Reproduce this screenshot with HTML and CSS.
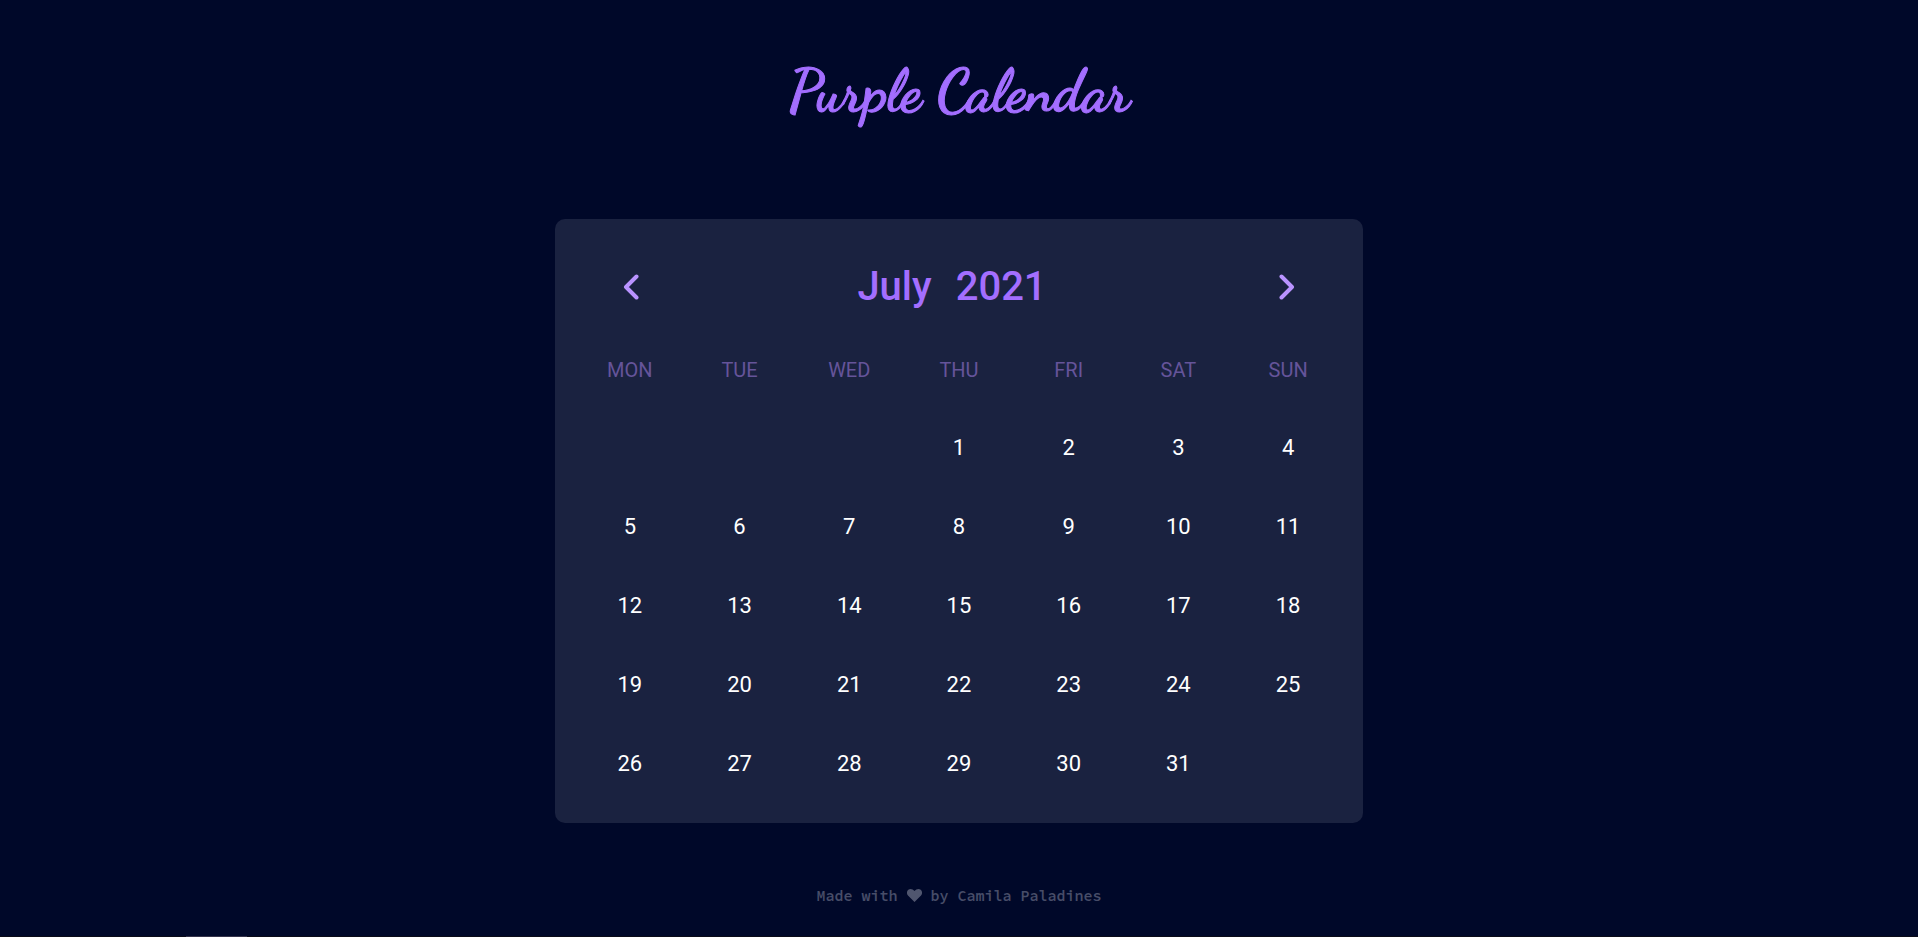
FILE: index.html
```html
<!DOCTYPE html>
<html lang="en">
<head>
<meta charset="utf-8">
<title>Purple Calendar</title>
<link rel="stylesheet" href="styles.css">
</head>
<body>
<h1 class="title">Purple Calendar</h1>
<main class="calendar">
  <header class="calendar-header">
    <button class="arrow" type="button" aria-label="Previous month">
      <svg width="16" height="26" viewBox="0 0 16 26"><path d="M13.5 2.5 3 13l10.500 10.500"/></svg>
    </button>
    <h2 class="period"><span>July</span><span>2021</span></h2>
    <button class="arrow" type="button" aria-label="Next month">
      <svg width="16" height="26" viewBox="0 0 16 26"><path d="M2.500 2.500 13 13 2.500 23.500"/></svg>
    </button>
  </header>
  <table class="days">
    <thead>
      <tr><th scope="col">MON</th><th scope="col">TUE</th><th scope="col">WED</th><th scope="col">THU</th><th scope="col">FRI</th><th scope="col">SAT</th><th scope="col">SUN</th></tr>
    </thead>
    <tbody>
      <tr><td></td><td></td><td></td><td>1</td><td>2</td><td>3</td><td>4</td></tr>
      <tr><td>5</td><td>6</td><td>7</td><td>8</td><td>9</td><td>10</td><td>11</td></tr>
      <tr><td>12</td><td>13</td><td>14</td><td>15</td><td>16</td><td>17</td><td>18</td></tr>
      <tr><td>19</td><td>20</td><td>21</td><td>22</td><td>23</td><td>24</td><td>25</td></tr>
      <tr><td>26</td><td>27</td><td>28</td><td>29</td><td>30</td><td>31</td><td></td></tr>
    </tbody>
  </table>
</main>
<footer class="credit">
  <span>Made with</span>
  <svg class="heart" width="15" height="13" viewBox="0 0 15 13"><path d="M7.500 13 1.200 6.800C-.6 5-.4 2.200 1.300.8 3.100-.6 5.700-.1 7.500 2 9.300-.1 11.900-.6 13.700.8c1.700 1.400 1.900 4.200.1 6z"/></svg>
  <span>by Camila Paladines</span>
</footer>
<div class="dock"></div>
</body>
</html>
```
FILE: styles.css
```css
* {
  box-sizing: border-box;
}

body {
  display: flex;
  flex-direction: column;
  align-items: center;
  min-height: 100vh;
  margin: 0;
  background: #000829;
  color: #fff;
  font-family: Roboto, "Liberation Sans", sans-serif;
}

.title {
  margin: 52px 0 87px;
  color: #a36eff;
  font-family: "Dancing Script", Lato, cursive;
  font-size: 58px;
  font-weight: 700;
  line-height: 80px;
  -webkit-text-stroke: 1px #a36eff;
}

.calendar {
  width: 100%;
  max-width: 808px;
  padding: 32px 20px 18px;
  border-radius: 10px;
  background: #1a2240;
}

.calendar-header {
  display: flex;
  align-items: center;
  justify-content: space-between;
  height: 72px;
  padding: 0 48px;
}

.arrow {
  display: flex;
  padding: 0;
  border: 0;
  background: none;
  cursor: pointer;
}

.arrow path {
  fill: none;
  stroke: #b993ff;
  stroke-width: 4;
  stroke-linecap: round;
  stroke-linejoin: round;
}

.period {
  display: flex;
  gap: 24px;
  margin: 0;
  padding-right: 14px;
  color: #a36eff;
  font-size: 40px;
  font-weight: 500;
  line-height: 48px;
}

.days {
  width: 100%;
  border-collapse: collapse;
  table-layout: fixed;
}

.days th {
  height: 87px;
  padding: 6px 0 0;
  color: #65549a;
  font-size: 20px;
  font-weight: 400;
  text-align: center;
}

.days td {
  height: 79px;
  padding: 0 0 4px;
  font-size: 22px;
  text-align: center;
}

.credit {
  display: flex;
  align-items: center;
  gap: 9px;
  margin-top: 63px;
  color: #474d68;
  font-family: Consolas, "Source Code Pro", "DejaVu Sans Mono", monospace;
  font-size: 15px;
  font-weight: 600;
  line-height: 20px;
}

.heart {
  margin-bottom: 2px;
  fill: #50566f;
}

.dock {
  align-self: stretch;
  height: 1px;
  margin-top: auto;
  background: linear-gradient(#35334a, #35334a) 186px 0 / 61px 1px no-repeat #0b0b18;
}
```
